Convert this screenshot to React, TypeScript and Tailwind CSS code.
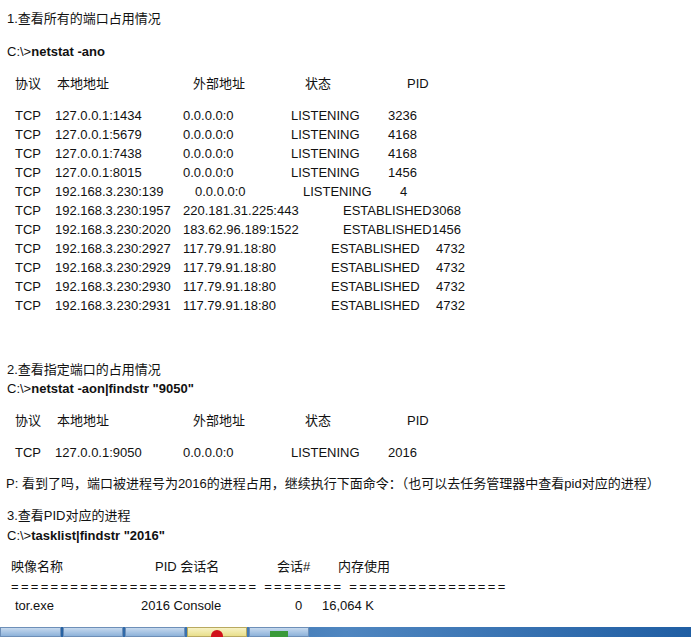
const font = { fontFamily: '"Liberation Sans", "Noto Sans CJK SC", sans-serif' }

type Cell = [string, string]

const rows: Cell[][] = [
  [['TCP', 'w-[40px]'], ['127.0.0.1:1434', 'w-[128px]'], ['0.0.0.0:0', 'w-[108px]'], ['LISTENING', 'w-[97px]'], ['3236', '']],
  [['TCP', 'w-[40px]'], ['127.0.0.1:5679', 'w-[128px]'], ['0.0.0.0:0', 'w-[108px]'], ['LISTENING', 'w-[97px]'], ['4168', '']],
  [['TCP', 'w-[40px]'], ['127.0.0.1:7438', 'w-[128px]'], ['0.0.0.0:0', 'w-[108px]'], ['LISTENING', 'w-[97px]'], ['4168', '']],
  [['TCP', 'w-[40px]'], ['127.0.0.1:8015', 'w-[128px]'], ['0.0.0.0:0', 'w-[108px]'], ['LISTENING', 'w-[97px]'], ['1456', '']],
  [['TCP', 'w-[40px]'], ['192.168.3.230:139', 'w-[140px]'], ['0.0.0.0:0', 'w-[108px]'], ['LISTENING', 'w-[97px]'], ['4', '']],
  [['TCP', 'w-[40px]'], ['192.168.3.230:1957', 'w-[128px]'], ['220.181.31.225:443', 'w-[160px]'], ['ESTABLISHED', 'w-[89px]'], ['3068', '']],
  [['TCP', 'w-[40px]'], ['192.168.3.230:2020', 'w-[128px]'], ['183.62.96.189:1522', 'w-[160px]'], ['ESTABLISHED', 'w-[89px]'], ['1456', '']],
  [['TCP', 'w-[40px]'], ['192.168.3.230:2927', 'w-[128px]'], ['117.79.91.18:80', 'w-[148px]'], ['ESTABLISHED', 'w-[105px]'], ['4732', '']],
  [['TCP', 'w-[40px]'], ['192.168.3.230:2929', 'w-[128px]'], ['117.79.91.18:80', 'w-[148px]'], ['ESTABLISHED', 'w-[105px]'], ['4732', '']],
  [['TCP', 'w-[40px]'], ['192.168.3.230:2930', 'w-[128px]'], ['117.79.91.18:80', 'w-[148px]'], ['ESTABLISHED', 'w-[105px]'], ['4732', '']],
  [['TCP', 'w-[40px]'], ['192.168.3.230:2931', 'w-[128px]'], ['117.79.91.18:80', 'w-[148px]'], ['ESTABLISHED', 'w-[105px]'], ['4732', '']],
]

function Line({ cells, className = '' }: { cells: Cell[]; className?: string }) {
  return (
    <div className={`flex h-[19px] leading-[19px] whitespace-nowrap ${className}`}>
      {cells.map(([t, w], i) => (
        <span key={i} className={`shrink-0 ${w}`}>{t}</span>
      ))}
    </div>
  )
}

const header: Cell[] = [['协议', 'w-[42px]'], ['本地地址', 'w-[136px]'], ['外部地址', 'w-[112px]'], ['状态', 'w-[102px]'], ['PID', '']]

export default function App() {
  return (
    <div className="h-[637px] w-[691px] bg-white text-[13px] text-[#111] flex flex-col overflow-hidden" style={font}>
      <div className="flex-1 pt-[9px] pl-[7px]">
        <div className="h-[19px] leading-[19px]">1.查看所有的端口占用情况</div>
        <div className="h-[19px] leading-[19px] mt-[14px]">C:\&gt;<b>netstat -ano</b></div>
        <Line cells={header} className="mt-[13px] pl-[8px]" />
        <div className="mt-[13px] pl-[8px]">
          {rows.map((r, i) => <Line key={i} cells={r} />)}
        </div>

        <div className="h-[19px] leading-[19px] mt-[45px]">2.查看指定端口的占用情况</div>
        <div className="h-[19px] leading-[19px]">C:\&gt;<b>netstat -aon|findstr "9050"</b></div>
        <Line cells={header} className="mt-[13px] pl-[8px]" />
        <Line cells={[['TCP', 'w-[40px]'], ['127.0.0.1:9050', 'w-[128px]'], ['0.0.0.0:0', 'w-[108px]'], ['LISTENING', 'w-[97px]'], ['2016', '']]} className="mt-[13px] pl-[8px]" />
        <div className="h-[19px] leading-[19px] mt-[12px] -ml-[1px] whitespace-nowrap">P: 看到了吗，端口被进程号为2016的进程占用，继续执行下面命令：（也可以去任务管理器中查看pid对应的进程）</div>

        <div className="h-[19px] leading-[19px] mt-[13px]">3.查看PID对应的进程</div>
        <div className="h-[19px] leading-[19px] mt-[1px]">C:\&gt;<b>tasklist|findstr "2016"</b></div>
        <Line cells={[['映像名称', 'w-[144px]'], ['PID 会话名', 'w-[122px]'], ['会话#', 'w-[61px]'], ['内存使用', '']]} className="mt-[12px] pl-[4px]" />
        <div className="h-[19px] leading-[19px] mt-[1px] pl-[4px] tracking-[2.3px] whitespace-nowrap">========================= ======== ================</div>
        <Line cells={[['tor.exe', 'w-[126px]'], ['2016 Console', 'w-[154px]'], ['0', 'w-[27px]'], ['16,064 K', '']]} className="pl-[8px]" />
      </div>
      <div className="h-[10px] flex gap-[2px] bg-gradient-to-r from-[#1d5a9c] via-[#4f86c0] to-[#1f5ea3]">
        <div className="w-[61px] bg-gradient-to-b from-[#c6d9ee] to-[#8db2da] border border-[#6d8fb8]" />
        <div className="w-[60px] bg-gradient-to-b from-[#c6d9ee] to-[#8db2da] border border-[#6d8fb8]" />
        <div className="w-[60px] bg-gradient-to-b from-[#c6d9ee] to-[#8db2da] border border-[#6d8fb8]" />
        <div className="w-[60px] bg-gradient-to-b from-[#f7f2c4] to-[#e9df8a] border border-[#b8a960] flex justify-center"><div className="w-[12px] h-[8px] mt-[2px] rounded-t-full bg-[#d0121b]" /></div>
        <div className="w-[60px] bg-gradient-to-b from-[#c6d9ee] to-[#8db2da] border border-[#6d8fb8] flex justify-center"><div className="w-[18px] h-[7px] mt-[3px] bg-[#3a9a3a]" /></div>
      </div>
    </div>
  )
}
